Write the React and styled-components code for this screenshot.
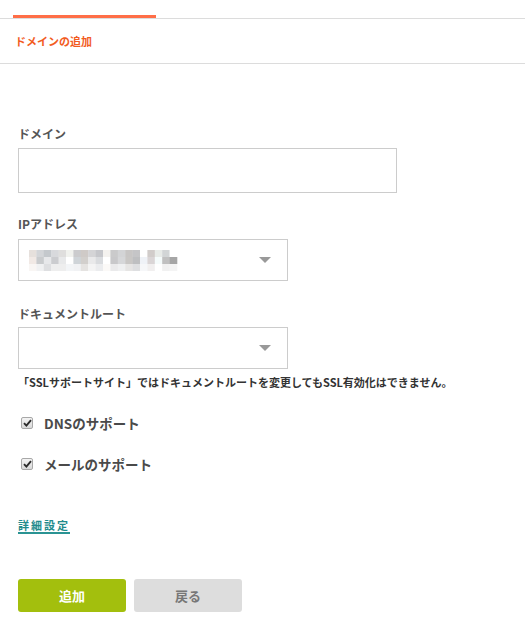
import React from "react";
import styled, { createGlobalStyle } from "styled-components";

const Global = createGlobalStyle`
  html, body { margin: 0; padding: 0; background: #fff; }
  body { font-family: "Noto Sans CJK JP", "Noto Sans", sans-serif; color: #555; }
`;

const Page = styled.div`
  width: 525px;
  min-height: 629px;
  background: #fff;
`;

const TabBar = styled.div`
  padding: 15px 0 0 13px;
  border-bottom: 1px solid #dcdcdc;
  display: flex;
`;

const ActiveTab = styled.div`
  width: 143px;
  height: 3px;
  background: #ff6e47;
`;

const TitleBar = styled.div`
  height: 44px;
  display: flex;
  align-items: center;
  padding-left: 15px;
  border-bottom: 1px solid #dcdcdc;
`;

const Title = styled.h1`
  margin: 0;
  font-size: 11px;
  font-weight: 700;
  color: #f25c1f;
  line-height: 16px;
`;

const Form = styled.div`
  display: flex;
  flex-direction: column;
  padding: 60px 0 0 18px;
`;

const Field = styled.div`
  display: flex;
  flex-direction: column;
  margin-top: ${(p) => p.$mt || 0}px;
`;

const Label = styled.label`
  font-size: 12px;
  font-weight: 700;
  color: #555;
  line-height: 20px;
  margin-bottom: ${(p) => p.$mb || 4}px;
`;

const TextInput = styled.input`
  box-sizing: border-box;
  width: 379px;
  height: 45px;
  border: 1px solid #cccccc;
  background: #fff;
  outline: none;
  padding: 0 10px;
`;

const Select = styled.div`
  box-sizing: border-box;
  width: 270px;
  height: 42px;
  border: 1px solid #cccccc;
  background: #fff;
  display: flex;
  align-items: center;
  justify-content: space-between;
  padding: 0 16px 0 10px;
`;

const Arrow = styled.span`
  width: 0;
  height: 0;
  border-left: 6px solid transparent;
  border-right: 6px solid transparent;
  border-top: 6px solid #999;
  margin-left: auto;
`;

const Note = styled.p`
  margin: 5px 0 0;
  font-size: 11px;
  font-weight: 700;
  color: #333;
  line-height: 16px;
  white-space: nowrap;
`;

const CheckRow = styled.div`
  display: flex;
  align-items: center;
  height: 20px;
  margin-top: ${(p) => p.$mt}px;
  padding-left: 3px;
`;

const CheckBox = styled.span`
  box-sizing: border-box;
  width: 12px;
  height: 12px;
  border: 1px solid #a8a8a8;
  border-radius: 2px;
  background: linear-gradient(#f4f4f4, #d9d9d9);
  display: flex;
  align-items: center;
  justify-content: center;
  margin-right: 11px;
`;

const CheckLabel = styled.span`
  font-size: 13.5px;
  font-weight: 700;
  color: #4a4a4a;
  line-height: 20px;
`;

const LinkWrap = styled.div`
  margin-top: 44px;
  display: flex;
`;

const DetailLink = styled.a`
  display: inline-block;
  font-size: 11px;
  font-weight: 700;
  line-height: 14px;
  letter-spacing: 2px;
  color: #1f8b8c;
  text-decoration: none;
  border-bottom: 2px solid #2a9393;
`;

const Buttons = styled.div`
  display: flex;
  gap: 8px;
  margin-top: 45px;
`;

const Button = styled.button`
  width: 108px;
  height: 33px;
  border: none;
  border-radius: 3px;
  font-family: "Noto Sans CJK JP", sans-serif;
  font-size: 13px;
  font-weight: 700;
  background: ${(p) => (p.$primary ? "#a3bf0d" : "#dddddd")};
  color: ${(p) => (p.$primary ? "#ffffff" : "#777777")};
  cursor: pointer;
  padding: 0;
`;

const mosaic = [
  ["#e6e0dc", "#d3d5d8", "#c4c8cc", "#d8d9dc", "#dfdedd", "#f1f2ee", "#cbcbcd", "#cfcac7", "#d4d4d6", "#c6c7cb", "#f4f2ef", "#cacacb", "#d3d4d6", "#c8c6c5", "#c5c5c7", "#ffffff", "#d1ccca", "#e8ebe8", "#d2d5d6", "#ffffff"],
  ["#f1e9e5", "#c9cbcd", "#e7e8ea", "#cbcccf", "#e8e9ea", "#ffffff", "#cfd4d8", "#d2cfcc", "#e9e9ea", "#d9dbde", "#ffffff", "#c8c8ca", "#d6d7d9", "#c9c7c5", "#bebfc1", "#eff2f7", "#dad5d6", "#f5fbfb", "#c0c0c0", "#a6a6a6"],
  ["#f9f6f4", "#f0f1f2", "#dedfe1", "#eeeeee", "#eeeeee", "#f3f5f7", "#f1f2f4", "#e5e3e1", "#f4f4f4", "#ebecee", "#fbf9f7", "#eaeaeb", "#eff0f1", "#e6e5e4", "#dedfe1", "#f6f7f9", "#f1efef", "#ffffff", "#f1f1f1", "#f4f4f4"],
];

function Blurred() {
  const w = 7.4;
  const h = 7;
  return (
    <svg width="150" height="21" viewBox="0 0 150 21" aria-hidden="true">
      {mosaic.map((row, r) =>
        row.map((c, i) => (
          <rect key={`${r}-${i}`} x={i * w} y={r * h} width={w + 0.3} height={h} fill={c} />
        ))
      )}
    </svg>
  );
}

function Check() {
  return (
    <svg width="9" height="8" viewBox="0 0 9 8" aria-hidden="true">
      <path d="M1 4.2 L3.4 6.6 L8 1.2" fill="none" stroke="#2b2b2b" strokeWidth="1.9" />
    </svg>
  );
}

export default function App() {
  return (
    <Page>
      <Global />
      <TabBar>
        <ActiveTab />
      </TabBar>
      <TitleBar>
        <Title>ドメインの追加</Title>
      </TitleBar>
      <Form>
        <Field>
          <Label>ドメイン</Label>
          <TextInput type="text" />
        </Field>
        <Field $mt={21}>
          <Label $mb={5}>IPアドレス</Label>
          <Select>
            <Blurred />
            <Arrow />
          </Select>
        </Field>
        <Field $mt={23}>
          <Label $mb={3}>ドキュメントルート</Label>
          <Select>
            <Arrow />
          </Select>
        </Field>
        <Note>「SSLサポートサイト」ではドキュメントルートを変更してもSSL有効化はできません。</Note>
        <CheckRow $mt={23}>
          <CheckBox>
            <Check />
          </CheckBox>
          <CheckLabel>DNSのサポート</CheckLabel>
        </CheckRow>
        <CheckRow $mt={21}>
          <CheckBox>
            <Check />
          </CheckBox>
          <CheckLabel>メールのサポート</CheckLabel>
        </CheckRow>
        <LinkWrap>
          <DetailLink href="#">詳細設定</DetailLink>
        </LinkWrap>
        <Buttons>
          <Button $primary>追加</Button>
          <Button>戻る</Button>
        </Buttons>
      </Form>
    </Page>
  );
}
